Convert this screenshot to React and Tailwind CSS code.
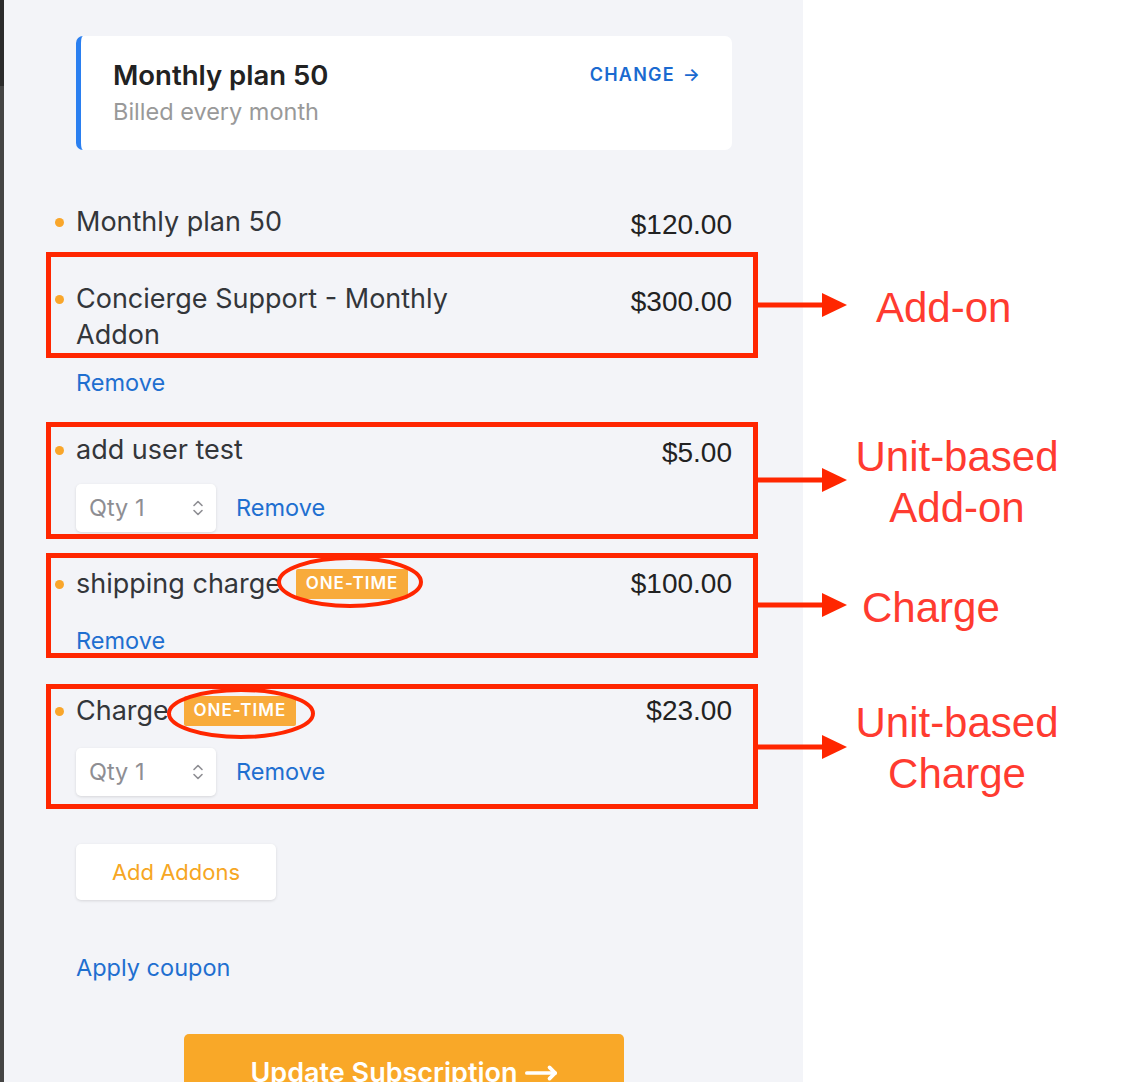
import React from 'react';
import { MoveRight } from 'lucide-react';

// up/down chevrons used in the qty selects
function UpDown() {
  return (
    <svg width="12" height="18" viewBox="0 0 12 18" fill="none" stroke="#8e8e93" strokeWidth="1.6" strokeLinecap="round" strokeLinejoin="round">
      <path d="M2 6.5 L6 2.5 L10 6.5" />
      <path d="M2 11.5 L6 15.5 L10 11.5" />
    </svg>
  );
}

function QtyRow() {
  return (
    <div className="flex items-center gap-[20px]">
      <div className="flex h-[48px] w-[140px] items-center justify-between rounded-[5px] bg-white pl-[13px] pr-[12px] shadow-[0_1px_3px_rgba(0,0,0,0.12)]">
        <span className="text-[23.5px] leading-[30px] text-[#8e8e93]">Qty 1</span>
        <UpDown />
      </div>
      <a className="text-[23.5px] leading-[30px] text-[#1f6fd0]">Remove</a>
    </div>
  );
}

function Badge() {
  return (
    <span className="ml-[15px] flex h-[30px] w-[112px] shrink-0 items-center justify-center rounded-[2px] bg-[#f8ab3b] text-[17px] font-semibold tracking-[1px] text-white">
      ONE-TIME
    </span>
  );
}

function Item({ name, price, badge, className = '', children }) {
  return (
    <div className={className}>
      <div className="flex items-start justify-between">
        <div className="flex items-center">
          <span className="-ml-[21px] mr-[12px] mt-[14px] h-[9px] w-[9px] shrink-0 self-start rounded-full bg-[#f9a62b]" />
          <span className="max-w-[390px] text-[27px] leading-[36px] text-[#33363a]">{name}</span>
          {badge && <Badge />}
        </div>
        <span className={`${badge ? 'mt-0' : 'mt-[3px]'} font-['Liberation_Sans',Arial,sans-serif] text-[28px] leading-[36px] text-[#222]`}>{price}</span>
      </div>
      {children}
    </div>
  );
}

function RedBox({ className }) {
  return <div className={`absolute border-[5px] border-[#ff2600] ${className}`} />;
}

function Arrow({ className }) {
  return (
    <svg className={`absolute ${className}`} width="92" height="26" viewBox="0 0 92 26">
      <line x1="0" y1="13" x2="68" y2="13" stroke="#ff2600" strokeWidth="5" />
      <polygon points="66,1 91,13 66,25" fill="#ff2600" />
    </svg>
  );
}

export default function App() {
  return (
    <div className="relative flex h-[1082px] w-[1144px] overflow-hidden bg-white font-['Inter',sans-serif]">
      {/* dark window edge */}
      <div className="flex w-[4px] shrink-0 flex-col">
        <div className="h-[86px] bg-[#2b2b2b]" />
        <div className="flex-1 bg-[#444444]" />
      </div>

      {/* checkout panel */}
      <div className="w-[799px] shrink-0 bg-[#f3f4f8] pl-[72px] pr-[71px] pt-[36px]">
        <div className="flex h-[114px] items-start justify-between rounded-[7px] border-l-[5px] border-[#2a7ff0] bg-white pl-[32px] pr-[32px] pt-[23px]">
          <div>
            <div className="text-[27.5px] font-semibold leading-[32px] text-[#222]">Monthly plan 50</div>
            <div className="mt-[6px] text-[23.5px] leading-[30px] text-[#999]">Billed every month</div>
          </div>
          <a className="flex items-center text-[18px] font-semibold leading-[32px] tracking-[1.2px] text-[#1a6ad0]">
            CHANGE <span className="ml-[8px] tracking-normal">→</span>
          </a>
        </div>

        <Item className="mt-[54px]" name="Monthly plan 50" price="$120.00" />
        <Item className="mt-[38px]" name="Concierge Support - Monthly Addon" price="$300.00" />
        <a className="mt-[15px] block text-[23.5px] leading-[30px] text-[#1f6fd0]">Remove</a>

        <Item className="mt-[34px]" name="add user test" price="$5.00">
          <div className="mt-[13px]">
            <QtyRow />
          </div>
        </Item>

        <Item className="mt-[34px]" name="shipping charge" price="$100.00" badge />
        <a className="mt-[24px] block text-[23.5px] leading-[30px] text-[#1f6fd0]">Remove</a>

        <Item className="mt-[37px]" name="Charge" price="$23.00" badge>
          <div className="mt-[19px]">
            <QtyRow />
          </div>
        </Item>

        <button className="mt-[48px] flex h-[56px] w-[200px] items-center justify-center rounded-[5px] bg-white text-[22px] text-[#f6a623] shadow-[0_1px_3px_rgba(0,0,0,0.12)]">
          Add Addons
        </button>

        <a className="mt-[53px] block text-[23.5px] leading-[30px] text-[#1f6fd0]">Apply coupon</a>

        <div className="mt-[51px] flex justify-center">
          <button className="flex h-[72px] w-[440px] items-center justify-center gap-[6px] rounded-[5px] bg-[#f9a828] pt-[6px] text-[27px] font-semibold text-white">
            Update Subscription <MoveRight size={34} strokeWidth={2.6} />
          </button>
        </div>
      </div>

      {/* annotation layer */}
      <RedBox className="left-[46px] top-[252px] h-[106px] w-[712px]" />
      <RedBox className="left-[46px] top-[422px] h-[117px] w-[712px]" />
      <RedBox className="left-[46px] top-[553px] h-[105px] w-[712px]" />
      <RedBox className="left-[46px] top-[684px] h-[125px] w-[712px]" />

      <svg className="absolute left-[276px] top-[555px]" width="148" height="54" viewBox="0 0 148 54">
        <ellipse cx="74" cy="27" rx="71" ry="24" fill="none" stroke="#ff2600" strokeWidth="4" />
      </svg>
      <svg className="absolute left-[166px] top-[687px]" width="150" height="53" viewBox="0 0 150 53">
        <ellipse cx="75" cy="26.5" rx="72" ry="23.5" fill="none" stroke="#ff2600" strokeWidth="4" />
      </svg>

      <Arrow className="left-[756px] top-[292px]" />
      <Arrow className="left-[756px] top-[467px]" />
      <Arrow className="left-[756px] top-[592px]" />
      <Arrow className="left-[756px] top-[734px]" />

      <div className="absolute left-[876px] top-[282px] font-['Liberation_Sans',Arial,sans-serif] text-[42px] leading-[51px] text-[#ff3b30]">Add-on</div>
      <div className="absolute left-[845px] top-[431px] w-[224px] text-center font-['Liberation_Sans',Arial,sans-serif] text-[42px] leading-[51px] text-[#ff3b30]">
        Unit-based<br />Add-on
      </div>
      <div className="absolute left-[862px] top-[582px] font-['Liberation_Sans',Arial,sans-serif] text-[42px] leading-[51px] text-[#ff3b30]">Charge</div>
      <div className="absolute left-[845px] top-[697px] w-[224px] text-center font-['Liberation_Sans',Arial,sans-serif] text-[42px] leading-[51px] text-[#ff3b30]">
        Unit-based<br />Charge
      </div>
    </div>
  );
}
